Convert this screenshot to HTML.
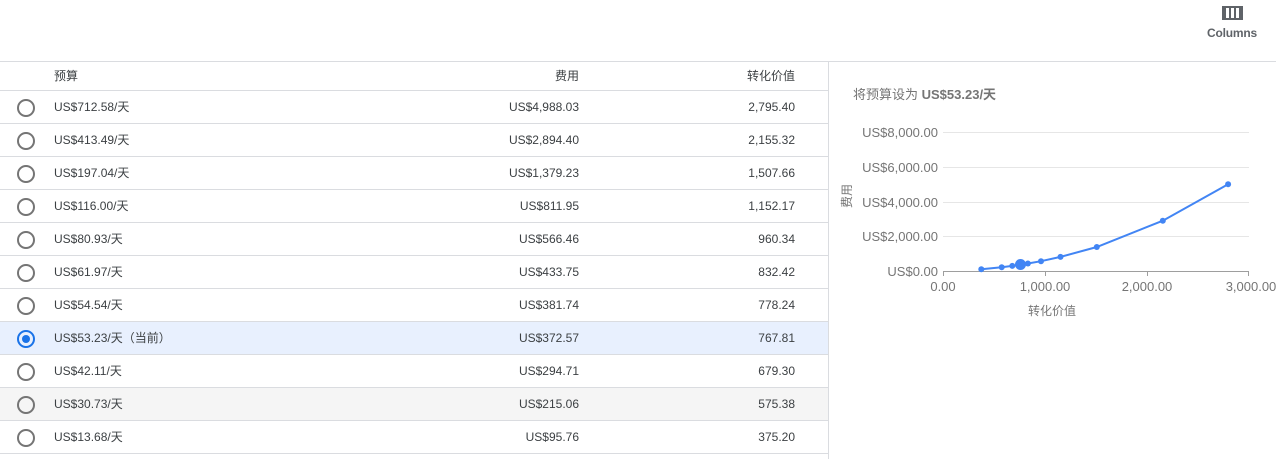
<!DOCTYPE html>
<html><head><meta charset="utf-8"><style>
*{margin:0;padding:0;box-sizing:border-box}
body{width:1276px;height:459px;overflow:hidden;background:#fff;font-family:"Liberation Sans","Noto Sans CJK SC",sans-serif;font-size:12px;color:#3c4043;position:relative}
.topline{position:absolute;left:0;top:61px;width:1276px;height:1px;background:#dadce0}
.vline{position:absolute;left:828px;top:62px;width:1px;height:397px;background:#dadce0}
.row{position:absolute;left:0;width:828px;height:33px;border-bottom:1px solid #dadce0}
.row span{position:absolute;top:0;line-height:32px}
.b{left:54px}.c{right:249px}.v{right:33px}
.radio{position:absolute;left:17px;top:8px;width:18px;height:18px;border:2px solid #757575;border-radius:50%}
.sel .radio{border-color:#1a73e8}
.sel .radio:after{content:"";position:absolute;left:3px;top:3px;width:8px;height:8px;border-radius:50%;background:#1a73e8}
</style></head><body>
<div style="position:absolute;left:1222px;top:6px;width:21px;height:14px;border:2px solid #5f6368;background:#5f6368">
<div style="position:absolute;left:2px;top:0;width:3px;height:10px;background:#fff"></div>
<div style="position:absolute;left:7px;top:0;width:3px;height:10px;background:#fff"></div>
<div style="position:absolute;left:12px;top:0;width:3px;height:10px;background:#fff"></div>
</div>
<div style="position:absolute;left:1207px;top:26px;font-size:12px;color:#5f6368;font-weight:bold;letter-spacing:-0.2px">Columns</div>
<div class="topline"></div>
<div class="vline"></div>
<div class="row" style="top:62px;height:29px"><span class="b" style="line-height:28px">预算</span><span class="c" style="line-height:28px">费用</span><span class="v" style="line-height:28px">转化价值</span></div>
<div class="row" style="top:91px"><div class="radio"></div><span class="b">US$712.58/天</span><span class="c">US$4,988.03</span><span class="v">2,795.40</span></div>
<div class="row" style="top:124px"><div class="radio"></div><span class="b">US$413.49/天</span><span class="c">US$2,894.40</span><span class="v">2,155.32</span></div>
<div class="row" style="top:157px"><div class="radio"></div><span class="b">US$197.04/天</span><span class="c">US$1,379.23</span><span class="v">1,507.66</span></div>
<div class="row" style="top:190px"><div class="radio"></div><span class="b">US$116.00/天</span><span class="c">US$811.95</span><span class="v">1,152.17</span></div>
<div class="row" style="top:223px"><div class="radio"></div><span class="b">US$80.93/天</span><span class="c">US$566.46</span><span class="v">960.34</span></div>
<div class="row" style="top:256px"><div class="radio"></div><span class="b">US$61.97/天</span><span class="c">US$433.75</span><span class="v">832.42</span></div>
<div class="row" style="top:289px"><div class="radio"></div><span class="b">US$54.54/天</span><span class="c">US$381.74</span><span class="v">778.24</span></div>
<div class="row sel" style="top:322px;background:#e8f0fe"><div class="radio"></div><span class="b">US$53.23/天（当前）</span><span class="c">US$372.57</span><span class="v">767.81</span></div>
<div class="row" style="top:355px"><div class="radio"></div><span class="b">US$42.11/天</span><span class="c">US$294.71</span><span class="v">679.30</span></div>
<div class="row" style="top:388px;background:#f5f5f5"><div class="radio"></div><span class="b">US$30.73/天</span><span class="c">US$215.06</span><span class="v">575.38</span></div>
<div class="row" style="top:421px"><div class="radio"></div><span class="b">US$13.68/天</span><span class="c">US$95.76</span><span class="v">375.20</span></div>

<div style="position:absolute;left:853px;top:84px;color:#757575;font-size:13px">将预算设为 <b>US$53.23/天</b></div>
<svg style="position:absolute;left:829px;top:62px" width="447" height="397" viewBox="829 62 447 397" font-family="Liberation Sans, Noto Sans CJK SC, sans-serif">
<g stroke="#e6e6e6" stroke-width="1">
<line x1="943" y1="132.5" x2="1249" y2="132.5"/><line x1="943" y1="167.5" x2="1249" y2="167.5"/><line x1="943" y1="202.5" x2="1249" y2="202.5"/><line x1="943" y1="236.5" x2="1249" y2="236.5"/>
</g>
<line x1="943" y1="271.5" x2="1249" y2="271.5" stroke="#9e9e9e"/>
<g stroke="#9e9e9e"><line x1="943.5" y1="271" x2="943.5" y2="276"/><line x1="1045.5" y1="271" x2="1045.5" y2="276"/><line x1="1147.5" y1="271" x2="1147.5" y2="276"/><line x1="1248.5" y1="271" x2="1248.5" y2="276"/></g>
<g fill="#757575" font-size="13" text-anchor="end">
<text x="938" y="137">US$8,000.00</text><text x="938" y="172">US$6,000.00</text><text x="938" y="207">US$4,000.00</text><text x="938" y="241">US$2,000.00</text><text x="938" y="276">US$0.00</text>
</g>
<g fill="#757575" font-size="13" text-anchor="middle">
<text x="943" y="291">0.00</text><text x="1045" y="291">1,000.00</text><text x="1147" y="291">2,000.00</text><text x="1251" y="291">3,000.00</text>
<text x="1052" y="315" font-size="12">转化价值</text>
</g>
<text transform="translate(851,196) rotate(-90)" fill="#757575" font-size="12" text-anchor="middle">费用</text>
<polyline fill="none" stroke="#4285f4" stroke-width="2" points="981.3,269.3 1001.7,267.3 1012.3,265.9 1021.3,264.5 1022.4,264.4 1027.9,263.5 1041,261.2 1060.5,256.9 1096.8,247 1162.8,220.7 1228.1,184.3"/>
<g fill="#4285f4">
<circle cx="981.3" cy="269.3" r="3"/><circle cx="1001.7" cy="267.3" r="3"/><circle cx="1012.3" cy="265.9" r="3"/><circle cx="1022.4" cy="264.4" r="3"/><circle cx="1027.9" cy="263.5" r="3"/><circle cx="1041" cy="261.2" r="3"/><circle cx="1060.5" cy="256.9" r="3"/><circle cx="1096.8" cy="247" r="3"/><circle cx="1162.8" cy="220.7" r="3"/><circle cx="1228.1" cy="184.3" r="3"/>
<circle cx="1020.5" cy="264.5" r="5.5"/>
</g>
</svg>
</body></html>
